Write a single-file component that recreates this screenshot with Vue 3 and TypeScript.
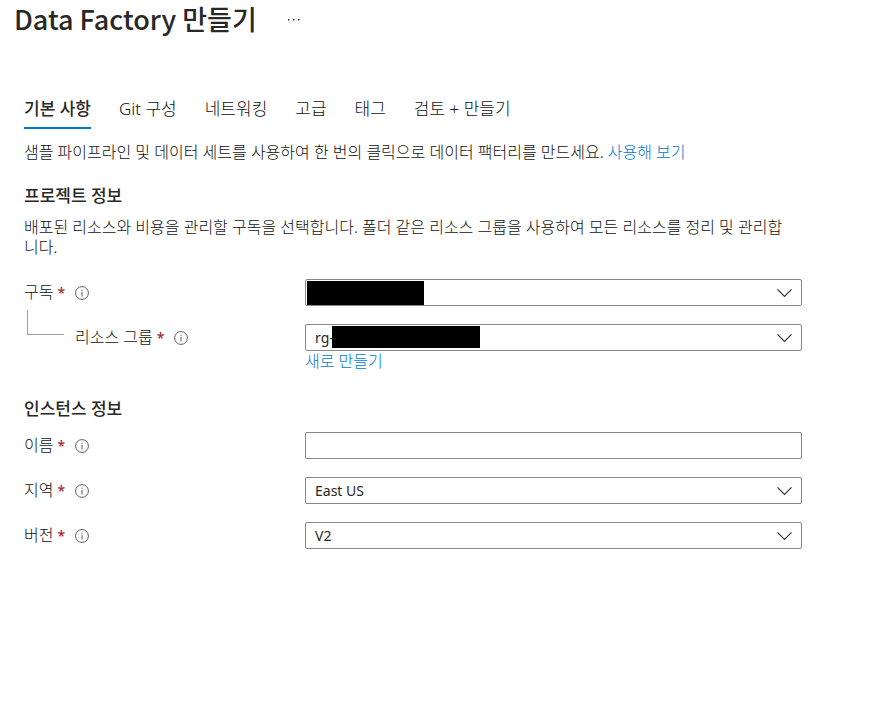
<script setup lang="ts">
import { ref } from 'vue'

interface Field {
  id: string
  label: string
  kind: 'select' | 'text'
  value: string
  nested?: boolean
  mask?: 'full' | 'partial'
  link?: string
}

interface Section {
  title: string
  description?: string
  fields: Field[]
}

const tabs: string[] = ['기본 사항', 'Git 구성', '네트워킹', '고급', '태그', '검토 + 만들기']
const activeTab = ref<number>(0)

const sections = ref<Section[]>([
  {
    title: '프로젝트 정보',
    description:
      '배포된 리소스와 비용을 관리할 구독을 선택합니다. 폴더 같은 리소스 그룹을 사용하여 모든 리소스를 정리 및 관리합니다.',
    fields: [
      { id: 'subscription', label: '구독', kind: 'select', value: '', mask: 'full' },
      {
        id: 'resource-group',
        label: '리소스 그룹',
        kind: 'select',
        value: 'rg-',
        nested: true,
        mask: 'partial',
        link: '새로 만들기',
      },
    ],
  },
  {
    title: '인스턴스 정보',
    fields: [
      { id: 'name', label: '이름', kind: 'text', value: '' },
      { id: 'region', label: '지역', kind: 'select', value: 'East US' },
      { id: 'version', label: '버전', kind: 'select', value: 'V2' },
    ],
  },
])
</script>

<template>
  <main class="page">
    <header class="header">
      <h1 class="title">Data Factory 만들기</h1>
      <button class="more" type="button">
        <svg width="14" height="4" viewBox="0 0 14 4" aria-hidden="true">
          <rect x="1" y="1" width="1.5" height="1.5" />
          <rect x="6" y="1" width="1.5" height="1.5" />
          <rect x="11" y="1" width="1.5" height="1.5" />
        </svg>
      </button>
    </header>

    <div class="content">
      <nav class="tabs" role="tablist">
        <button
          v-for="(tab, index) in tabs"
          :key="tab"
          class="tab"
          :class="{ active: index === activeTab }"
          type="button"
          role="tab"
          :aria-selected="index === activeTab"
          @click="activeTab = index"
        >
          {{ tab }}
        </button>
      </nav>

      <p class="intro">
        샘플 파이프라인 및 데이터 세트를 사용하여 한 번의 클릭으로 데이터 팩터리를 만드세요.
        <a class="link" href="#sample">사용해 보기</a>
      </p>

      <section v-for="section in sections" :key="section.title" class="section">
        <h2 class="section-title">{{ section.title }}</h2>
        <p v-if="section.description" class="description">{{ section.description }}</p>
        <div class="fields">
          <div v-for="field in section.fields" :key="field.id" class="field">
            <div class="label-cell">
              <span v-if="field.nested" class="branch"></span>
              <label class="label" :for="field.id">{{ field.label }}<span class="required">*</span></label>
              <svg class="info" width="14" height="14" viewBox="0 0 14 14" aria-hidden="true">
                <circle cx="7" cy="7" r="6.4" fill="none" stroke="#605e5c" stroke-width="1" />
                <rect x="6.5" y="6" width="1" height="4.5" fill="#605e5c" />
                <rect x="6.5" y="3.6" width="1" height="1.2" fill="#605e5c" />
              </svg>
            </div>
            <div class="control-cell">
              <div class="control">
                <input v-if="field.kind === 'text'" :id="field.id" v-model="field.value" class="box" type="text" />
                <template v-else>
                  <select :id="field.id" v-model="field.value" class="box">
                    <option :value="field.value">{{ field.value }}</option>
                  </select>
                  <svg class="chevron" width="16" height="10" viewBox="0 0 16 10" aria-hidden="true">
                    <path d="M1.5 1.4 L8.5 8.4 L15.5 1.4" fill="none" stroke="#323130" stroke-width="1.2" />
                  </svg>
                  <span v-if="field.mask" class="mask" :class="field.mask"></span>
                </template>
              </div>
              <a v-if="field.link" class="link create" href="#new">{{ field.link }}</a>
            </div>
          </div>
        </div>
      </section>
    </div>
  </main>
</template>

<style>
body {
  margin: 0;
  background: #fff;
}
</style>

<style scoped>
.page {
  color: #111;
  font-family: 'Noto Sans', 'Noto Sans CJK KR', sans-serif;
  font-size: 16px;
  font-weight: 300;
  line-height: 20px;
}

.header {
  display: flex;
  align-items: center;
  gap: 30px;
  height: 38px;
  padding-left: 14px;
}

.title {
  margin: 0;
  color: #292827;
  font-family: 'Noto Sans CJK KR', sans-serif;
  font-size: 27px;
  font-weight: 500;
  line-height: 36px;
}

.more {
  display: flex;
  padding: 2px 0 0;
  border: 0;
  background: none;
  fill: #323130;
}

.content {
  padding: 58px 87px 0 24px;
}

.tabs {
  display: flex;
  gap: 28px;
}

.tab {
  padding: 3px 0 8px;
  border: 0;
  border-bottom: 2px solid transparent;
  background: none;
  color: inherit;
  font: inherit;
  font-size: 17px;
  white-space: nowrap;
}

.tab.active {
  border-bottom-color: #0078d4;
  color: #292827;
  font-weight: 500;
}

.intro {
  margin: 13px 0 0;
}

.link {
  color: #0078d4;
  text-decoration: none;
}

.section {
  padding-top: 24px;
}

.section + .section {
  padding-top: 28px;
}

.section-title {
  margin: 0;
  color: #292827;
  font-size: 17px;
  font-weight: 500;
  line-height: 20px;
}

.description {
  margin: 11px 0 10px;
  padding-right: 8px;
}

.fields {
  display: flex;
  flex-direction: column;
  gap: 18px;
  padding-top: 12px;
}

.field {
  display: flex;
  align-items: flex-start;
}

.label-cell {
  display: flex;
  flex: 0 0 281px;
  align-items: center;
  height: 27px;
}

.branch {
  align-self: flex-start;
  width: 36px;
  height: 24px;
  margin: -14px 11px 0 3px;
  border-bottom: 1px solid #a19f9d;
  border-left: 1px solid #a19f9d;
}

.required {
  margin-left: 4px;
  color: #a4262c;
  font-size: 14px;
  font-weight: 500;
}

.info {
  margin-left: 10px;
}

.control-cell {
  flex: 1;
  min-width: 0;
}

.control {
  position: relative;
}

.box {
  display: block;
  box-sizing: border-box;
  width: 100%;
  height: 27px;
  padding: 1px 9px 0;
  border: 1px solid #8a8886;
  border-radius: 2px;
  background: #fff;
  color: #292827;
  font: inherit;
  font-size: 14px;
  font-weight: 400;
  appearance: none;
}

.chevron {
  position: absolute;
  top: 9px;
  right: 10px;
  pointer-events: none;
}

.mask {
  position: absolute;
  top: 2px;
  background: #000;
  pointer-events: none;
}

.mask.full {
  left: 2px;
  width: 117px;
  height: 24px;
}

.mask.partial {
  left: 27px;
  width: 148px;
  height: 22px;
}

.create {
  display: block;
}

.section + .section .fields {
  padding-top: 13px;
}
</style>
